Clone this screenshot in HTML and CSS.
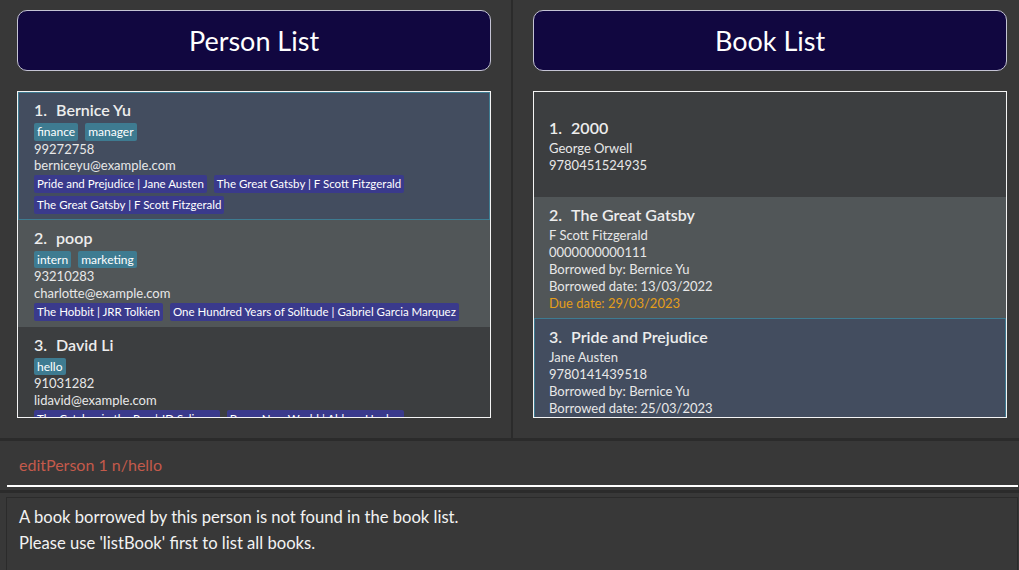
FILE: index.html
```html
<!DOCTYPE html>
<html lang="en">
<head>
<meta charset="utf-8">
<title>Library</title>
<link rel="stylesheet" href="styles.css">
</head>
<body>
<div class="app">
  <div class="top">
    <section class="panel panel-left">
      <div class="panel-header">Person List</div>
      <div class="list">
        <div class="card person selected">
          <div class="name"><span class="idx">1.</span>Bernice Yu</div>
          <div class="tags"><span class="tag">finance</span><span class="tag">manager</span></div>
          <div class="line">99272758</div>
          <div class="line">berniceyu@example.com</div>
          <div class="tags books"><span class="btag">Pride and Prejudice | Jane Austen</span><span class="btag">The Great Gatsby | F Scott Fitzgerald</span><span class="btag">The Great Gatsby | F Scott Fitzgerald</span></div>
        </div>
        <div class="card person odd">
          <div class="name"><span class="idx">2.</span>poop</div>
          <div class="tags"><span class="tag">intern</span><span class="tag">marketing</span></div>
          <div class="line">93210283</div>
          <div class="line">charlotte@example.com</div>
          <div class="tags books"><span class="btag">The Hobbit | JRR Tolkien</span><span class="btag">One Hundred Years of Solitude | Gabriel Garcia Marquez</span></div>
        </div>
        <div class="card person even">
          <div class="name"><span class="idx">3.</span>David Li</div>
          <div class="tags"><span class="tag">hello</span></div>
          <div class="line">91031282</div>
          <div class="line">lidavid@example.com</div>
          <div class="tags books"><span class="btag">The Catcher in the Rye | JD Salinger</span><span class="btag">Brave New World | Aldous Huxley</span></div>
        </div>
      </div>
    </section>
    <div class="vdivider"></div>
    <section class="panel panel-right">
      <div class="panel-header">Book List</div>
      <div class="list">
        <div class="card book even">
          <div class="name"><span class="idx">1.</span>2000</div>
          <div class="line first">George Orwell</div>
          <div class="line">9780451524935</div>
        </div>
        <div class="card book odd">
          <div class="name"><span class="idx">2.</span>The Great Gatsby</div>
          <div class="line first">F Scott Fitzgerald</div>
          <div class="line">0000000000111</div>
          <div class="line">Borrowed by: Bernice Yu</div>
          <div class="line">Borrowed date: 13/03/2022</div>
          <div class="line due">Due date: 29/03/2023</div>
        </div>
        <div class="card book selected">
          <div class="name"><span class="idx">3.</span>Pride and Prejudice</div>
          <div class="line first">Jane Austen</div>
          <div class="line">9780141439518</div>
          <div class="line">Borrowed by: Bernice Yu</div>
          <div class="line">Borrowed date: 25/03/2023</div>
        </div>
      </div>
    </section>
  </div>
  <div class="hband"></div>
  <div class="command-area">
    <div class="command-box">editPerson 1 n/hello</div>
  </div>
  <div class="hband"></div>
  <div class="result-area">
    <div class="result-box">
      <p>A book borrowed by this person is not found in the book list.</p>
      <p>Please use 'listBook' first to list all books.</p>
    </div>
  </div>
</div>
</body>
</html>
```

FILE: styles.css
```css
html, body {
  margin: 0;
  padding: 0;
  background: #383838;
  font-family: "Lato", "Open Sans", sans-serif;
  color: #f2f2f2;
}

.app {
  width: 1019px;
  height: 570px;
  display: grid;
  grid-template-rows: 438px 3px 49px 3px 1fr;
  overflow: hidden;
}

.top {
  display: grid;
  grid-template-columns: 511px 2px 1fr;
  min-height: 0;
}

.vdivider {
  background: #2b2b2b;
}

.hband {
  background: #2b2b2b;
}

.panel {
  display: flex;
  flex-direction: column;
  gap: 20px;
  min-height: 0;
}

.panel-left {
  padding: 10px 20px 0 17px;
}

.panel-right {
  padding: 10px 12px 0 20px;
}

.panel-header {
  box-sizing: border-box;
  height: 61px;
  flex: none;
  background: #110740;
  border: 1px solid #c4c3d4;
  border-radius: 10px;
  display: flex;
  align-items: center;
  justify-content: center;
  font-size: 27px;
  color: #ffffff;
}

.list {
  box-sizing: border-box;
  height: 327px;
  flex: none;
  border: 1px solid #f4f4f4;
  overflow: hidden;
}

.card {
  box-sizing: border-box;
  min-height: 105px;
  border: 1px solid transparent;
  padding: 7px 0 5px 15px;
  display: flex;
  flex-direction: column;
  justify-content: center;
}

.card.book {
  padding-left: 14px;
  padding-bottom: 5px;
}

.card.even { background: #3c3e40; }
.card.odd { background: #515658; }
.card.selected {
  background: #434d5f;
  border-color: #3e7b91;
}

.name {
  font-size: 16px;
  line-height: 20px;
  font-weight: 600;
  color: #ededed;
}

.idx {
  margin-right: 9px;
}

.tags {
  display: flex;
  flex-wrap: wrap;
  gap: 3px 7px;
  margin-top: 3px;
}

.tags.books {
  margin-top: 1px;
}

.tag, .btag {
  font-size: 12px;
  line-height: 15.5px;
  padding: 1px 3px;
  border-radius: 2px;
  color: #ffffff;
}

.tag { background: #3e7b91; }
.btag {
  background: #3a3a8c;
  font-size: 11.5px;
  line-height: 16px;
}

.line {
  font-size: 13px;
  line-height: 16.7px;
  color: #e8e8e8;
}

.book .line {
  line-height: 17px;
}

.book .line.first {
  margin-top: 2px;
}

.line.due {
  color: #e59e1a;
}

.command-area {
  padding: 0 1px 0 7px;
}

.command-box {
  box-sizing: border-box;
  height: 46px;
  padding: 14px 0 0 12px;
  border-bottom: 2px solid #ffffff;
  font-size: 16px;
  line-height: 20px;
  color: #c45a4b;
}

.result-area {
  padding: 4px 1px 0 6px;
  min-height: 0;
  overflow: hidden;
}

.result-box {
  box-sizing: border-box;
  height: 100%;
  border: 1px solid #2b2b2b;
  border-bottom: none;
  padding: 7px 0 0 12px;
}

.result-box p {
  margin: 0;
  font-size: 16.6px;
  line-height: 25.5px;
  color: #f2f2f2;
}
```
